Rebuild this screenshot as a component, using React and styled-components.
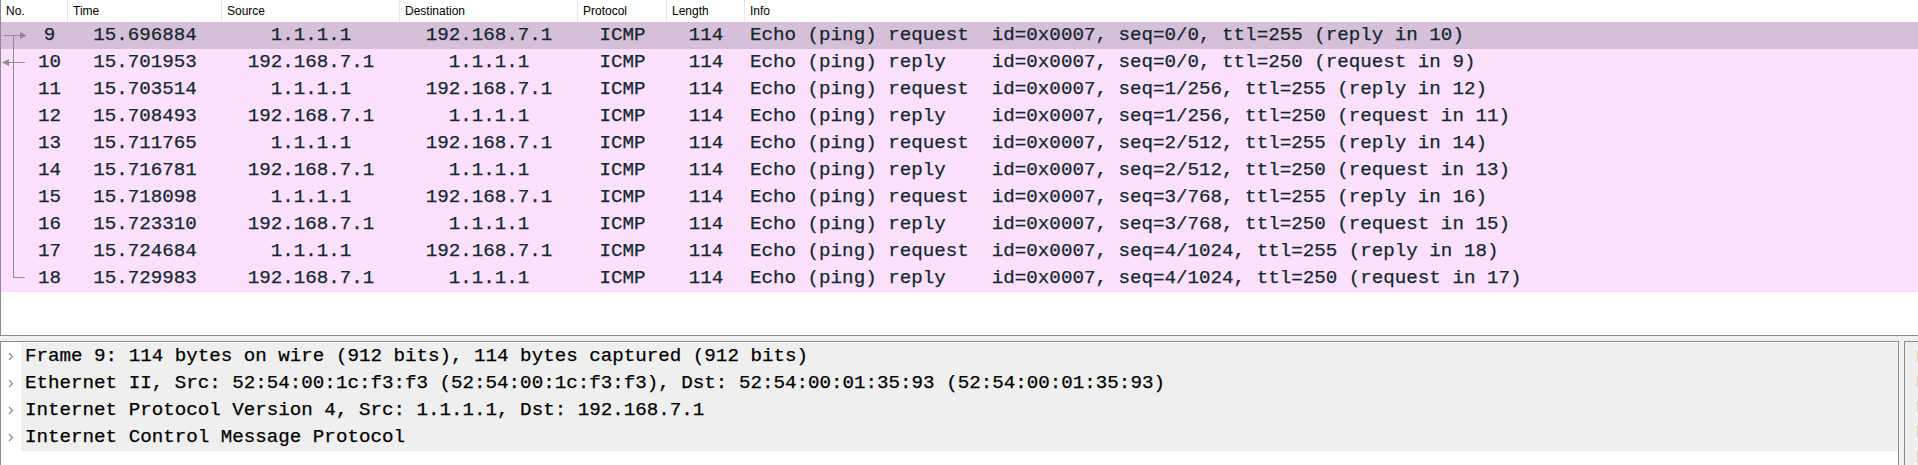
import styled, {createGlobalStyle} from "styled-components";

const GlobalStyle = createGlobalStyle`
  html, body {
    margin: 0;
    padding: 0;
    background: #f0f0f0;
    overflow: hidden;
  }
`

const packets = [
  {no: 9, time: "15.696884", src: "1.1.1.1", dst: "192.168.7.1", info: "Echo (ping) request  id=0x0007, seq=0/0, ttl=255 (reply in 10)", mark: "first"},
  {no: 10, time: "15.701953", src: "192.168.7.1", dst: "1.1.1.1", info: "Echo (ping) reply    id=0x0007, seq=0/0, ttl=250 (request in 9)", mark: "reply"},
  {no: 11, time: "15.703514", src: "1.1.1.1", dst: "192.168.7.1", info: "Echo (ping) request  id=0x0007, seq=1/256, ttl=255 (reply in 12)", mark: "mid"},
  {no: 12, time: "15.708493", src: "192.168.7.1", dst: "1.1.1.1", info: "Echo (ping) reply    id=0x0007, seq=1/256, ttl=250 (request in 11)", mark: "mid"},
  {no: 13, time: "15.711765", src: "1.1.1.1", dst: "192.168.7.1", info: "Echo (ping) request  id=0x0007, seq=2/512, ttl=255 (reply in 14)", mark: "mid"},
  {no: 14, time: "15.716781", src: "192.168.7.1", dst: "1.1.1.1", info: "Echo (ping) reply    id=0x0007, seq=2/512, ttl=250 (request in 13)", mark: "mid"},
  {no: 15, time: "15.718098", src: "1.1.1.1", dst: "192.168.7.1", info: "Echo (ping) request  id=0x0007, seq=3/768, ttl=255 (reply in 16)", mark: "mid"},
  {no: 16, time: "15.723310", src: "192.168.7.1", dst: "1.1.1.1", info: "Echo (ping) reply    id=0x0007, seq=3/768, ttl=250 (request in 15)", mark: "mid"},
  {no: 17, time: "15.724684", src: "1.1.1.1", dst: "192.168.7.1", info: "Echo (ping) request  id=0x0007, seq=4/1024, ttl=255 (reply in 18)", mark: "mid"},
  {no: 18, time: "15.729983", src: "192.168.7.1", dst: "1.1.1.1", info: "Echo (ping) reply    id=0x0007, seq=4/1024, ttl=250 (request in 17)", mark: "last"},
]

const details = [
  "Frame 9: 114 bytes on wire (912 bits), 114 bytes captured (912 bits)",
  "Ethernet II, Src: 52:54:00:1c:f3:f3 (52:54:00:1c:f3:f3), Dst: 52:54:00:01:35:93 (52:54:00:01:35:93)",
  "Internet Protocol Version 4, Src: 1.1.1.1, Dst: 192.168.7.1",
  "Internet Control Message Protocol",
]

const columns = "67px 154px 178px 178px 89px 78px 1fr"

const RelMark = ({kind}) => {
  const c = "#8f8f8f"
  return (
    <svg width="30" height="27" viewBox="0 0 30 27">
      {kind === "first" && (
        <>
          <line x1="3" y1="13.5" x2="20" y2="13.5" stroke={c} strokeWidth="1"/>
          <polygon points="19,10 26,13.5 19,17" fill={c}/>
          <line x1="12.5" y1="13.5" x2="12.5" y2="27" stroke={c} strokeWidth="1"/>
        </>
      )}
      {kind === "reply" && (
        <>
          <polygon points="8,10 1,13.5 8,17" fill={c}/>
          <line x1="7" y1="13.5" x2="24" y2="13.5" stroke={c} strokeWidth="1"/>
          <line x1="12.5" y1="0" x2="12.5" y2="27" stroke={c} strokeWidth="1"/>
        </>
      )}
      {kind === "mid" && (
        <line x1="12.5" y1="0" x2="12.5" y2="27" stroke={c} strokeWidth="1"/>
      )}
      {kind === "last" && (
        <>
          <line x1="12.5" y1="0" x2="12.5" y2="12.5" stroke={c} strokeWidth="1"/>
          <line x1="12" y1="12.5" x2="24" y2="12.5" stroke={c} strokeWidth="1"/>
        </>
      )}
    </svg>
  )
}

const Chevron = () => (
  <svg width="6" height="9" viewBox="0 0 6 9">
    <polyline points="1,1 4.5,4.5 1,8" fill="none" stroke="#8a8a8a" strokeWidth="1.1"/>
  </svg>
)

const App = () => {
  return (
    <>
      <GlobalStyle/>
      <SWindow>
        <SPacketList>
          <SHeaderRow>
            <SHeaderCell>No.</SHeaderCell>
            <SHeaderCell>Time</SHeaderCell>
            <SHeaderCell>Source</SHeaderCell>
            <SHeaderCell>Destination</SHeaderCell>
            <SHeaderCell>Protocol</SHeaderCell>
            <SHeaderCell>Length</SHeaderCell>
            <SHeaderCell $last>Info</SHeaderCell>
          </SHeaderRow>
          {packets.map(p => (
            <SPacketRow key={p.no} $selected={p.no === 9}>
              <SNoCell>
                <RelMark kind={p.mark}/>
                <span>{p.no}</span>
              </SNoCell>
              <SCell>{p.time}</SCell>
              <SCell>{p.src}</SCell>
              <SCell>{p.dst}</SCell>
              <SCell>ICMP</SCell>
              <SCell>114</SCell>
              <SCell $left>{p.info}</SCell>
            </SPacketRow>
          ))}
        </SPacketList>
        <SBottom>
          <SDetailPane>
            {details.map(d => (
              <SDetailRow key={d}>
                <SExpander><Chevron/></SExpander>
                <SDetailText>{d}</SDetailText>
              </SDetailRow>
            ))}
          </SDetailPane>
          <SBytePane>
            {[0, 1, 2, 3, 4].map(i => <SByteLine key={i}><span/></SByteLine>)}
          </SBytePane>
        </SBottom>
      </SWindow>
    </>
  )
}

const SWindow = styled.div`
  height: 465px;
  display: flex;
  flex-direction: column;
  gap: 5px;
  overflow: hidden;
`

const SPacketList = styled.div`
  height: 335px;
  flex-shrink: 0;
  background: #fff;
  border-left: 1px solid #8c8c8c;
  border-bottom: 1px solid #8c8c8c;
`

const SHeaderRow = styled.div`
  display: grid;
  grid-template-columns: ${columns};
  height: 22px;
  background: #fff;
`

const SHeaderCell = styled.div`
  font-family: "Liberation Sans", Arial, sans-serif;
  font-size: 12px;
  color: #000;
  line-height: 22px;
  padding-left: 5px;
  border-right: ${p => p.$last ? "none" : "1px solid #e5e5e5"};
`

const SPacketRow = styled.div`
  display: grid;
  grid-template-columns: ${columns};
  height: 27px;
  background: ${p => p.$selected ? "#d6bfd8" : "#fce0fd"};
  color: #12272e;
  font-family: "Liberation Mono", "DejaVu Sans Mono", monospace;
  font-size: 19.2px;
  line-height: 27px;
  white-space: pre;
  -webkit-text-stroke: 0.25px #12272e;
`

const SCell = styled.div`
  text-align: ${p => p.$left ? "left" : "center"};
  padding-left: ${p => p.$left ? "5px" : "0"};
  overflow: hidden;
`

const SNoCell = styled.div`
  display: flex;
  align-items: center;
  & span {
    flex: 1;
    text-align: center;
  }
  & svg {
    flex-shrink: 0;
  }
`

const SBottom = styled.div`
  flex: 1;
  display: flex;
  gap: 5px;
`

const SDetailPane = styled.div`
  width: 1897px;
  flex-shrink: 0;
  background: #fff;
  border: 1px solid #8c8c8c;
  border-bottom: none;
  padding-top: 1px;
  box-sizing: content-box;
`

const SDetailRow = styled.div`
  display: flex;
  height: 27px;
  font-family: "Liberation Mono", "DejaVu Sans Mono", monospace;
  font-size: 19.2px;
  line-height: 27px;
  color: #000;
  -webkit-text-stroke: 0.25px #000;
`

const SExpander = styled.div`
  width: 20px;
  display: flex;
  align-items: center;
  justify-content: flex-start;
  padding-left: 7px;
  box-sizing: border-box;
`

const SDetailText = styled.div`
  flex: 1;
  background: #efefef;
  padding-left: 4px;
  white-space: pre;
`

const SBytePane = styled.div`
  flex: 1;
  background: #efefef;
  border: 1px solid #8c8c8c;
  border-bottom: none;
  border-right: none;
  padding-top: 8px;
  display: flex;
  flex-direction: column;
  gap: 12px;
`

const SByteLine = styled.div`
  height: 13px;
  padding-left: 12px;
  & span {
    display: block;
    width: 20px;
    height: 13px;
    background: #e9cfae;
    border-radius: 2px;
  }
`

export default App
